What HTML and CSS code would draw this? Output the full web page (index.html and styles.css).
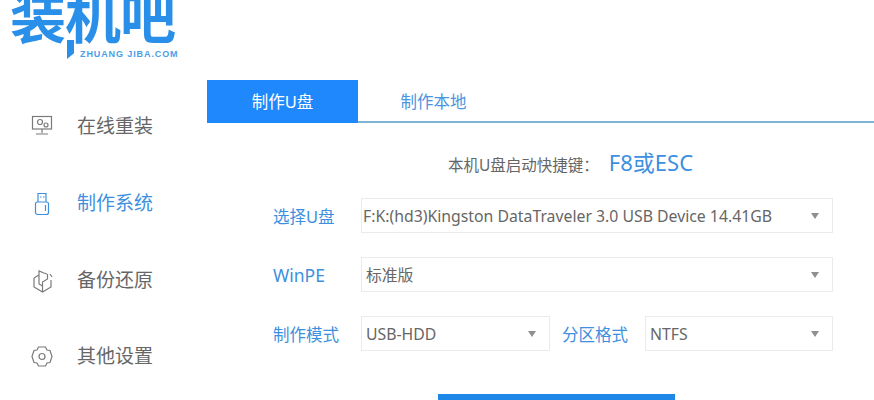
FILE: index.html

```html
<!DOCTYPE html>
<html lang="zh">
<head>
  <meta charset="UTF-8">
  <title>装机吧</title>
  <link rel="stylesheet" href="styles.css">
</head>
<body>
  <div class="app">

    <!-- 左侧菜单 -->
    <div class="side">
      <div class="logo">
        <div class="logo-name">装机吧</div>
        <div class="logo-url">ZHUANG JIBA.COM</div>
      </div>
      <ul class="menu">
        <li>
          <svg class="icon" viewBox="0 0 22 22"><rect x="1.500" y="2.500" width="19" height="12.500"/><circle cx="9" cy="8" r="2.500"/><circle cx="15" cy="11" r="2"/><path d="M11 15v4M5 20h12"/></svg>
          在线重装
        </li>
        <li class="on">
          <svg class="icon" viewBox="0 0 22 22"><path d="M7 11V2.500h8V11M9 6h1.500M12 6h1.500M14.500 14v6"/><rect x="4.500" y="11" width="13" height="12.500" rx="2"/></svg>
          制作系统
        </li>
        <li>
          <svg class="icon" viewBox="0 0 22 22"><path d="M3 10v9l8.500 5 8.500-5v-7M3 10l5-3V3l5 2M8 7v9l3.500 2M11.500 24V14l5-3V6M13 5l3 1M19 6l2 3"/></svg>
          备份还原
        </li>
        <li>
          <svg class="icon" viewBox="0 0 22 22"><path d="M7.500 3h7l1.500 3 3 .5 2 6-2 6-3 .5-1.500 3h-7L6 19l-3-.5-2-6 2-6 3-.5z"/><circle cx="11" cy="12.500" r="3"/></svg>
          其他设置
        </li>
      </ul>
    </div>

    <!-- 右侧内容 -->
    <div class="main">
      <div class="tabs">
        <div class="tab active">制作U盘</div>
        <div class="tab">制作本地</div>
      </div>

      <div class="hint">本机U盘启动快捷键：<span class="key">F8或ESC</span></div>

      <div class="row">
        <label>选择U盘</label>
        <div class="select"><span class="tight">F:K:(hd3)Kingston DataTraveler 3.0 USB Device 14.41GB</span><i></i></div>
      </div>
      <div class="row">
        <label class="latin">WinPE</label>
        <div class="select"><span>标准版</span><i></i></div>
      </div>
      <div class="row">
        <label>制作模式</label>
        <div class="select small"><span>USB-HDD</span><i></i></div>
        <label class="inner">分区格式</label>
        <div class="select"><span>NTFS</span><i></i></div>
      </div>

      <div class="btn"></div>
    </div>

  </div>
</body>
</html>
```

FILE: styles.css

```css
html, body { margin: 0; height: 400px; overflow: hidden; background: #fff; }
body { font-family: "Noto Sans", "Noto Sans CJK SC", sans-serif; color: #666; }
.app { display: flex; height: 400px; }

.side { width: 207px; flex: none; }
.logo { position: relative; height: 61px; padding-left: 10px; overflow: hidden; display: flex; flex-direction: column; justify-content: flex-end; align-items: flex-start; }
.logo::after { content: ""; position: absolute; left: 67px; top: 40px; width: 7px; height: 19px; background: #2a8fe8; clip-path: polygon(0 0, 100% 0, 100% 70%, 0 100%); }
.logo-name { height: 48px; font-family: "Noto Sans CJK SC", sans-serif; font-size: 56px; line-height: 28px; font-weight: 700; color: #2a8fe8; letter-spacing: -1px; white-space: nowrap; }
.logo-url { font-family: "Liberation Sans", sans-serif; font-size: 9px; line-height: 13px; font-weight: 700; color: #4a9ee8; letter-spacing: 0.9px; margin-left: 70px; white-space: nowrap; }

.menu { list-style: none; margin: 26px 0 0; padding: 0; }
.menu li { display: flex; align-items: center; height: 76.700px; padding-left: 31px; font-size: 19px; color: #666; }
.menu li.on { color: #3d8fe0; }
.icon { width: 22px; height: 22px; margin-right: 24px; fill: none; stroke: #7a7a7a; stroke-width: 1.200; overflow: visible; }
.menu li.on .icon { stroke: #3d8fe0; }

.main { flex: 1; }
.tabs { display: flex; margin-top: 80px; height: 41px; border-bottom: 2px solid #7fb6d8; }
.tab { width: 151px; height: 43px; line-height: 43px; text-align: center; font-size: 16.500px; color: #4a94e0; }
.tab.active { background: #1e88fc; color: #fff; }

.hint { height: 40px; margin: 19px 0 16px 241px; font-size: 15.500px; line-height: 40px; color: #666; white-space: nowrap; }
.key { font-size: 22px; margin-left: 10px; color: #3d8fe0; font-family: "Noto Sans", "Noto Sans CJK SC", sans-serif; }

.row { display: flex; align-items: center; height: 35px; margin: 0 41px 24px 66px; }
.row label { width: 88px; flex: none; font-size: 16.500px; color: #3d8fe0; }
.row label.latin { font-size: 17.500px; }
.row label.inner { width: 95px; padding-left: 12px; box-sizing: border-box; }
.select { flex: 1; height: 35px; box-sizing: border-box; border: 1px solid #ebebeb; padding: 0 13px 0 4px; display: flex; align-items: center; justify-content: space-between; font-size: 15.800px; color: #666; white-space: nowrap; }
.select.small { flex: none; width: 189px; }
.select .tight { margin-left: -3px; }
.select i { width: 0; height: 0; border-left: 4.500px solid transparent; border-right: 4.500px solid transparent; border-top: 6px solid #8f8f8f; }

.btn { width: 237px; height: 6px; margin: 43px 0 0 231px; background: #1e88e8; }
```
